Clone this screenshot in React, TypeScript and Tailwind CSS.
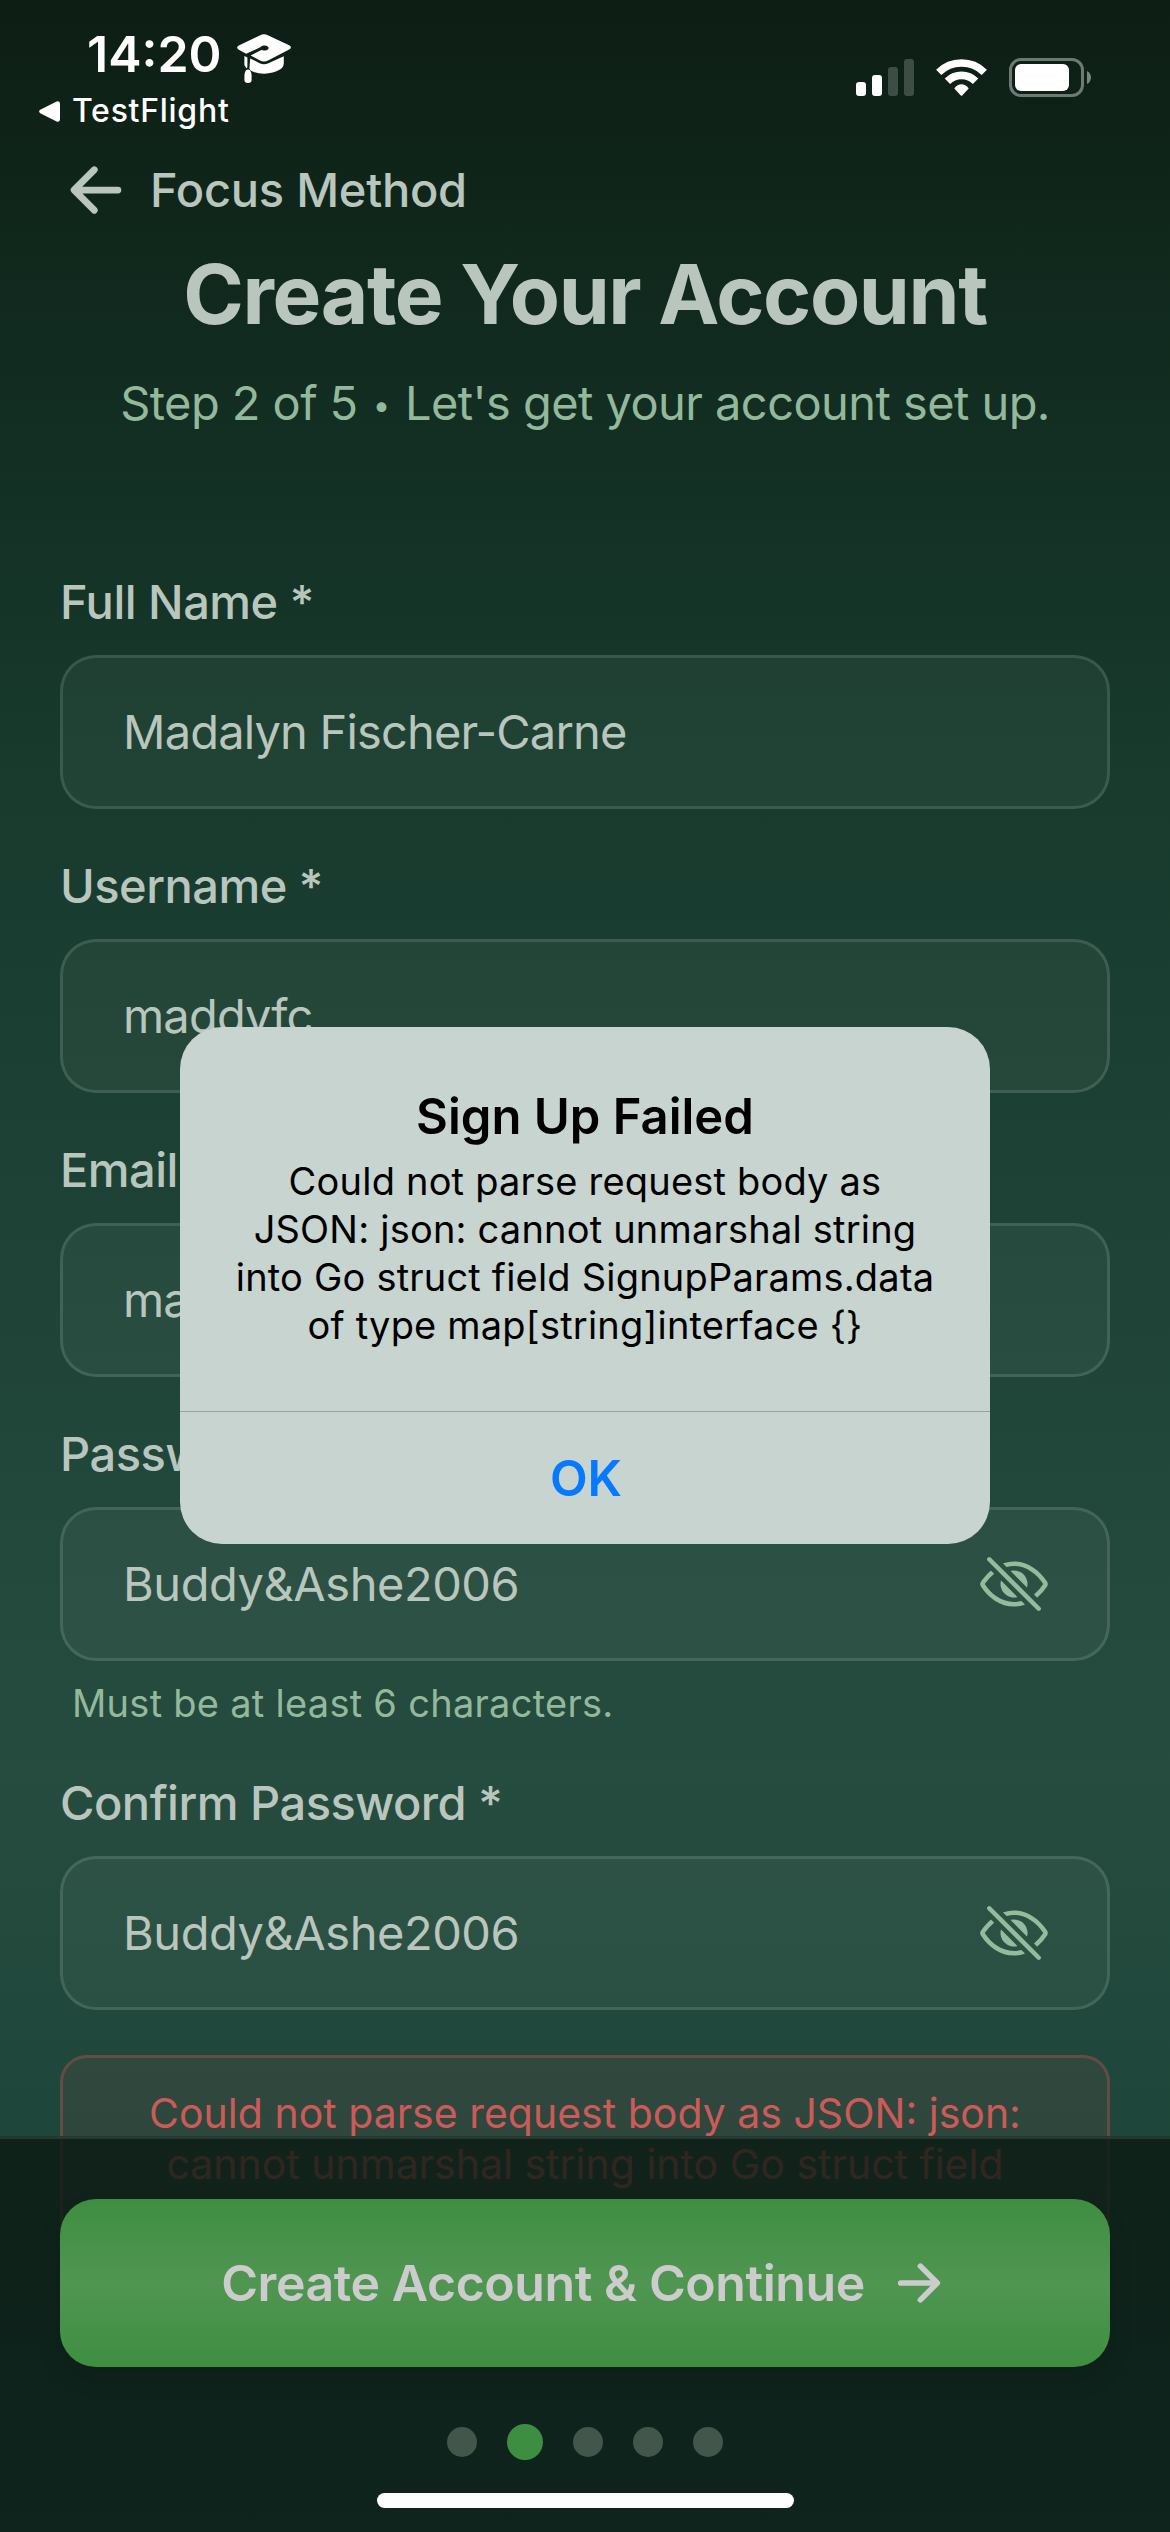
import type { ReactNode } from "react";
import { IoArrowBack, IoArrowForward, IoEyeOffOutline } from "react-icons/io5";

function GraduationCap() {
  return (
    <svg width="54" height="49" viewBox="0 0 54 49" fill="#fff">
      <path d="M23.2 1.2Q27-.6 30.8 1.2L52.2 11.3Q55.6 13.4 52.2 15.5L31 26.4Q27 28.4 23 26.4L13.6 21.6L24.4 16.1C26.8 17 31.6 16.4 31.6 13.9C31.6 11.2 25.4 10.4 22.8 13.6L9.2 19.7L1.8 15.8Q-1.6 13.6 1.8 11.4Z" />
      <path d="M13.2 24.4L22.6 29.2Q27 31.4 31.4 29.2L46.8 22.2V29Q46.8 33 43 35.6Q36 39.8 27 39.7Q19 39.6 13.6 36.4L12.4 34.6Z" />
      <path d="M7.4 22L10.4 23.4V33L9.6 34.4L7.4 31Z" />
      <path d="M11 35.4C13.6 35.4 14.6 39 14.6 42V46Q14.6 49 11 49Q7.4 49 7.4 46V42C7.4 39 8.4 35.4 11 35.4Z" />
    </svg>
  );
}

function SignalBars() {
  return (
    <div className="flex h-[37px] items-end gap-[6px]">
      <span className="h-[14px] w-[10px] rounded-[3px] bg-white" />
      <span className="h-[21px] w-[10px] rounded-[3px] bg-white" />
      <span className="h-[29px] w-[10px] rounded-[3px] bg-white/20" />
      <span className="h-[37px] w-[10px] rounded-[3px] bg-white/20" />
    </div>
  );
}

function Wifi() {
  return (
    <svg width="51" height="37" viewBox="0 0 51 37" fill="none">
      <path d="M2.7 13.3A32.5 32.5 0 0 1 48.3 13.3" stroke="#fff" strokeWidth="7.4" />
      <path d="M11.4 22.2A20 20 0 0 1 39.6 22.2" stroke="#fff" strokeWidth="7.6" />
      <path d="M18.3 29.4Q21.5 25.3 25.5 25.3Q29.5 25.3 32.7 29.4L26.2 36.5Q25.5 37.1 24.8 36.5Z" fill="#fff" />
    </svg>
  );
}

function Battery() {
  return (
    <div className="flex items-center gap-[3px]">
      <div className="flex h-[39px] w-[75px] rounded-[12px] border-[3px] border-white/40 p-[3px]">
        <span className="h-[27px] w-[54px] rounded-[6px] bg-white" />
      </div>
      <svg width="4" height="13" viewBox="0 0 4 13">
        <path d="M0 0C2.4 1 4 3.6 4 6.5S2.4 12 0 13Z" fill="#fff" fillOpacity=".45" />
      </svg>
    </div>
  );
}

function StatusBar() {
  return (
    <div className="flex h-[140px] items-start justify-between text-white">
      <div className="pt-[24px] pl-[39px]">
        <div className="flex h-[60px] pl-[48px]">
          <span className="w-[150px] text-[50px] leading-[60px] font-semibold whitespace-nowrap">14:20</span>
          <div className="pt-[10px]">
            <GraduationCap />
          </div>
        </div>
        <div className="mt-[7px] flex h-[40px] items-center">
          <svg width="21" height="21" viewBox="0 0 21 21" fill="#fff">
            <path d="M1.2 8.8L17.6.6Q21-.6 21 3V18Q21 21.6 17.6 20.4L1.2 12.2Q-1 10.5 1.2 8.8Z" />
          </svg>
          <span className="pl-[12px] text-[32px] leading-[40px] font-medium tracking-[0.72px] whitespace-nowrap">
            TestFlight
          </span>
        </div>
      </div>
      <div className="flex items-center gap-[22px] pt-[58px] pr-[79px]">
        <SignalBars />
        <Wifi />
        <Battery />
      </div>
    </div>
  );
}

function Field({ label, value, secret }: { label: string; value: string; secret?: boolean }) {
  return (
    <div>
      <div className="text-[47px] leading-[60px] font-medium tracking-[-0.5px] whitespace-nowrap">{label}</div>
      <div className="mt-[23px] flex h-[154px] items-center justify-between rounded-[36px] border-[3px] border-[#dcebe0]/14 bg-[#dcebe0]/5 pr-[57px] pl-[60px]">
        <span
          className={
            secret
              ? "text-[47px] leading-[60px] tracking-[-0.45px] whitespace-nowrap"
              : "text-[47px] leading-[60px] tracking-[-0.82px] whitespace-nowrap"
          }
        >
          {value}
        </span>
        {secret && <IoEyeOffOutline className="size-[72px] text-[#94bb9c]" />}
      </div>
    </div>
  );
}

function Dot({ active }: { active?: boolean }) {
  return active ? (
    <span className="size-[36px] rounded-full bg-[#3e8e41]" />
  ) : (
    <span className="size-[30px] rounded-full bg-[#43564c]" />
  );
}

function Line({ children }: { children: ReactNode }) {
  return <div className="whitespace-nowrap">{children}</div>;
}

function Footer() {
  return (
    <div className="absolute inset-x-0 bottom-0 h-[396px] border-t-[3px] border-[#26392f] bg-linear-to-b from-[#0a1912]/80 to-[#0d1f18]/85 px-[60px] pt-[60px]">
      <button className="flex h-[168px] w-full items-center justify-center gap-[24px] rounded-[36px] bg-linear-to-b from-[#3e8e41] via-[#509652] to-[#3e8e41] text-[#cccccc] shadow-[0_12px_24px_rgba(0,0,0,0.1)]">
        <span className="text-[50px] leading-[60px] font-semibold tracking-[-0.44px] whitespace-nowrap">
          Create Account &amp; Continue
        </span>
        <IoArrowForward className="size-[60px]" />
      </button>
      <div className="mt-[57px] flex h-[36px] items-center justify-center gap-[30px]">
        <Dot />
        <Dot active />
        <Dot />
        <Dot />
        <Dot />
      </div>
      <div className="mx-auto mt-[33px] h-[15px] w-[417px] rounded-full bg-white" />
    </div>
  );
}

function Alert() {
  return (
    <div className="absolute top-[1027px] left-[180px] flex h-[517px] w-[810px] flex-col rounded-[42px] bg-[#c7d4cf] pt-[60px] text-center text-black">
      <div className="text-[49px] leading-[60px] font-semibold whitespace-nowrap">Sign Up Failed</div>
      <div className="mt-[10px] h-[254px] text-[38px] leading-[48px] tracking-[0.2px]">
        <Line>Could not parse request body as</Line>
        <Line>JSON: json: cannot unmarshal string</Line>
        <Line>into Go struct field SignupParams.data</Line>
        <Line>of type map[string]interface {"{}"}</Line>
      </div>
      <button className="h-[133px] border-t border-[#94a59d] pl-[2px] text-[49px] leading-[134px] font-semibold text-[#067aff]">
        OK
      </button>
    </div>
  );
}

export default function App() {
  return (
    <div className="relative h-[2532px] w-[1170px] overflow-hidden bg-[linear-gradient(180deg,#0d1e14_0%,#173a2d_30%,#264c40_70%,#163f32_100%)] font-['Inter',sans-serif] text-[#b9c6bd]">
      <StatusBar />
      <div className="mt-[14px] flex h-[72px] items-center gap-[18px] pl-[60px]">
        <IoArrowBack className="size-[72px]" />
        <span className="text-[47px] leading-[72px] font-medium tracking-[-0.25px] whitespace-nowrap">Focus Method</span>
      </div>
      <h1 className="mt-[21px] text-center text-[82px] leading-[96px] font-bold tracking-[-1.4px] whitespace-nowrap">
        Create Your Account
      </h1>
      <p className="mt-[30px] text-center text-[47px] leading-[60px] tracking-[-0.57px] whitespace-nowrap text-[#94b89b]">
        Step 2 of 5{" "}
        <span className="relative -top-[4px] inline-block w-[22px] text-center text-[31px] leading-none">•</span>{" "}
        Let's get your account set up.
      </p>
      <div className="mt-[139px] flex flex-col gap-[47px] px-[60px]">
        <Field label="Full Name *" value="Madalyn Fischer-Carne" />
        <Field label="Username *" value="maddyfc" />
        <Field label="Email *" value="maddyfc" />
        <div>
          <Field label="Password *" value="Buddy&Ashe2006" secret />
          <div className="mt-[18px] h-[47px] pl-[12px] text-[38px] leading-[48px] tracking-[0.27px] whitespace-nowrap text-[#94b89b]">
            Must be at least 6 characters.
          </div>
        </div>
        <Field label="Confirm Password *" value="Buddy&Ashe2006" secret />
      </div>
      <div className="mx-[60px] mt-[45px] rounded-[27px] border-[3px] border-[#c65654]/35 bg-[#c65654]/10 py-[30px] text-center text-[41px] leading-[51px] text-[#cb5b59]">
        <Line>Could not parse request body as JSON: json:</Line>
        <Line>cannot unmarshal string into Go struct field</Line>
        <div className="pt-[2px]">
          <Line>SignupParams.data of type map[string]interface</Line>
          <Line>{"{}"}</Line>
        </div>
      </div>
      <Footer />
      <Alert />
    </div>
  );
}
